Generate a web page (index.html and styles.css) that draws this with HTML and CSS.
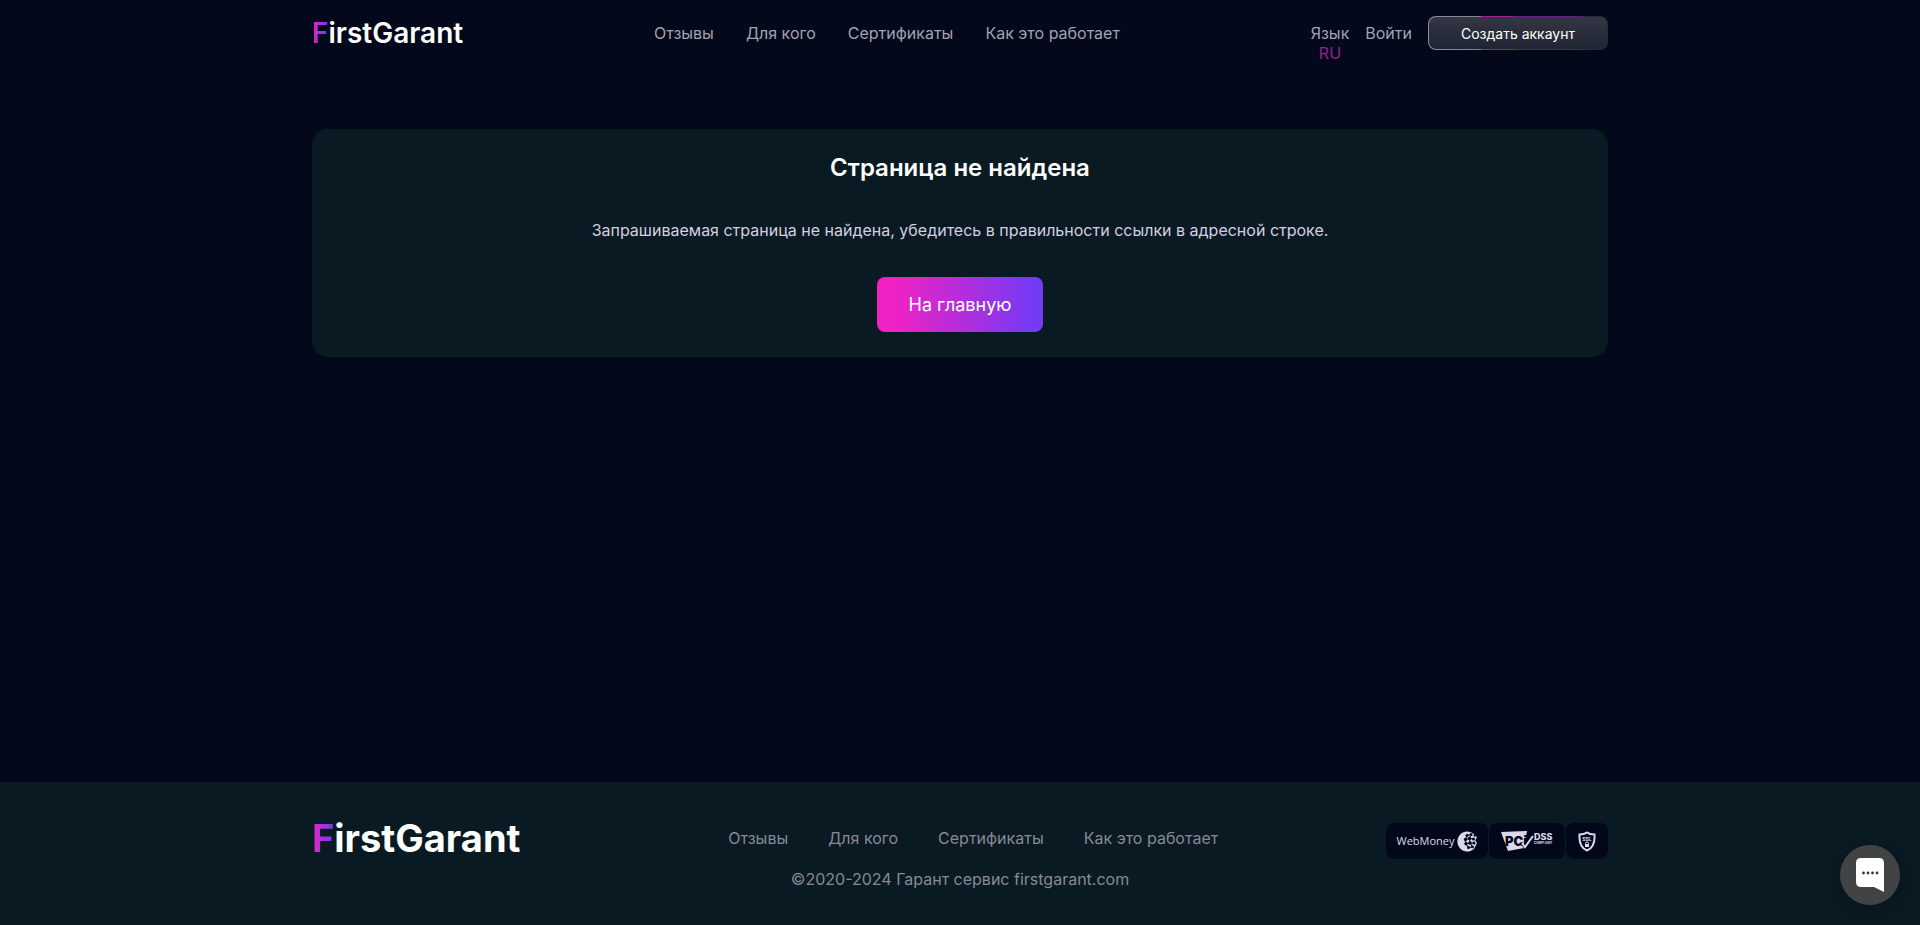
FILE: index.html
```
<!DOCTYPE html>
<html lang="ru">
<head>
    <meta charset="UTF-8">
    <meta name="viewport" content="width=device-width, initial-scale=1.0">
    <title>Страница не найдена</title>
    <link rel="stylesheet" href="styles.css">
</head>
<body>
    <header class="header">
        <div class="container header-row">
            <a href="#" class="logo"><span class="logo-accent">F</span>irstGarant</a>
            <nav class="nav">
                <a href="#">Отзывы</a>
                <a href="#">Для кого</a>
                <a href="#">Сертификаты</a>
                <a href="#">Как это работает</a>
            </nav>
            <div class="account">
                <div class="lang">
                    <span>Язык</span>
                    <a href="#" class="lang-current">RU</a>
                </div>
                <a href="#" class="login">Войти</a>
                <button type="button" class="btn-create">Создать аккаунт</button>
            </div>
        </div>
    </header>

    <main class="container main">
        <section class="card">
            <h1>Страница не найдена</h1>
            <p>Запрашиваемая страница не найдена, убедитесь в правильности ссылки в адресной строке.</p>
            <a href="#" class="btn-home">На главную</a>
        </section>
    </main>

    <footer class="footer">
        <div class="container footer-row">
            <a href="#" class="logo logo-big"><span class="logo-accent">F</span>irstGarant</a>
            <nav class="footer-nav">
                <a href="#">Отзывы</a>
                <a href="#">Для кого</a>
                <a href="#">Сертификаты</a>
                <a href="#">Как это работает</a>
            </nav>
            <div class="badges">
                <div class="badge badge-wm">
                    <span>WebMoney</span>
                    <svg width="21" height="21" viewBox="0 0 21 21">
                        <path fill="#dcd8ec" d="M10.500 0.500A10 10 0 1 0 17 18L19 14L20 12L18.500 9L20 6L17 3Q14 0.500 10.500 0.500Z"/>
                        <g fill="#03071a">
                            <circle cx="10" cy="4.500" r="1.500"/><circle cx="14" cy="3.500" r="1.500"/><circle cx="17.800" cy="4.500" r="1.200"/>
                            <circle cx="8.500" cy="8.500" r="1.700"/><circle cx="12.500" cy="7.500" r="1.700"/><circle cx="16.500" cy="8" r="1.500"/>
                            <circle cx="9" cy="12.700" r="1.700"/><circle cx="13" cy="12" r="1.700"/><circle cx="17" cy="12" r="1.500"/>
                            <circle cx="11.500" cy="16.500" r="1.500"/><circle cx="15.500" cy="16" r="1.400"/><circle cx="19.500" cy="9.500" r="1"/>
                        </g>
                        <path fill="none" stroke="#03071a" d="M14 3.500L10 4.500L8.500 8.500L9 12.700L11.500 16.500L15.500 16M14 3.500L12.500 7.500L13 12L15.500 16M8.500 8.500L12.500 7.500L16.500 8M9 12.700L13 12L17 12"/>
                    </svg>
                </div>
                <div class="badge badge-pci">
                    <svg width="53" height="21" viewBox="0 0 53 21">
                        <path fill="#dcd8ec" d="M0 1L26 0L23 17L7 20Z"/>
                        <text x="4" y="15" class="pci-text">PCi</text>
                        <path fill="none" stroke="#03071a" stroke-width="3" d="M21 13L24 16L31 6"/>
                        <path fill="none" stroke="#dcd8ec" stroke-width="2" d="M21 12L24 16L32 5"/>
                        <text x="33" y="9" class="dss-text">DSS</text>
                        <text x="33" y="13" class="dss-small">COMPLIANT</text>
                    </svg>
                </div>
                <div class="badge badge-ssl">
                    <svg width="18" height="21" viewBox="0 0 18 21">
                        <path fill="none" stroke="#dcd8ec" stroke-width="2" d="M9 1.500C7 3 4 3.500 1.500 3.500C1 11 3 17 9 19.500C15 17 17 11 16.500 3.500C14 3.500 11 3 9 1.500Z"/>
                        <text x="9" y="10" class="ssl-text">SSL</text>
                        <path fill="none" stroke="#dcd8ec" d="M7.500 13V12.500a1.500 1.500 0 0 1 3 0V13"/>
                        <rect x="7" y="13" width="4" height="3" fill="#dcd8ec"/>
                    </svg>
                </div>
            </div>
        </div>
        <p class="copyright">©2020-2024 Гарант сервис firstgarant.com</p>
    </footer>

    <button type="button" class="chat" aria-label="Чат">
        <svg width="28" height="35" viewBox="0 0 28 35">
            <path fill="#fff" d="M5 0H23Q28 0 28 5V34L18 29H5Q0 29 0 24V5Q0 0 5 0Z"/>
            <g fill="#33353f">
                <circle cx="7.500" cy="15" r="1.400"/><circle cx="12" cy="15" r="1.400"/>
                <circle cx="16.500" cy="15" r="1.400"/><circle cx="21" cy="15" r="1.400"/>
            </g>
        </svg>
    </button>
</body>
</html>
```
FILE: styles.css
```
* {
    box-sizing: border-box;
}
body {
    margin: 0;
    min-height: 100vh;
    display: flex;
    flex-direction: column;
    background-color: #03081a;
    color: #fff;
    font-family: Inter, sans-serif;
    font-size: 16px;
    line-height: 20px;
}
a {
    color: inherit;
    text-decoration: none;
}
button {
    font-family: inherit;
    cursor: pointer;
}
.container {
    width: 100%;
    max-width: 1320px;
    margin: 0 auto;
    padding: 0 12px;
}

/* header */
.header {
    padding-top: 16px;
}
.header-row {
    display: flex;
    justify-content: space-between;
    align-items: flex-start;
}
.logo {
    font-size: 28px;
    line-height: 34px;
    font-weight: 600;
}
.logo-accent {
    background: linear-gradient(90deg, #e724c4, #743af5);
    -webkit-background-clip: text;
    background-clip: text;
    color: transparent;
}
.nav {
    display: flex;
    gap: 32px;
    padding-top: 7px;
    color: #a1a3af;
}
.account {
    display: flex;
    gap: 16px;
    color: #a1a3af;
}
.lang {
    display: flex;
    flex-direction: column;
    align-items: center;
    padding-top: 7px;
}
.lang-current {
    color: #97218f;
}
.login {
    padding-top: 7px;
}
.btn-create {
    width: 180px;
    height: 34px;
    border: 1px solid transparent;
    border-radius: 8px;
    background:
        linear-gradient(180deg, #343743, #1f2433) padding-box,
        linear-gradient(90deg, #8b8d98 0%, #85838f 29%, #a01c93 30%, #a01c93 47%, #651a85 48%, #651a85 84%, #262b38 88%) border-box;
    color: #fff;
    font-size: 14px;
}

/* 404 */
.main {
    flex: 1;
    padding-top: 66px;
}
.card {
    display: flex;
    flex-direction: column;
    align-items: center;
    padding: 24px 24px 25px;
    border-radius: 16px;
    background-color: #091a23;
    text-align: center;
}
.card h1 {
    margin: 0;
    font-size: 24px;
    line-height: 30px;
    font-weight: 600;
}
.card p {
    margin: 36px 0;
    line-height: 22px;
    color: #d3cfe0;
}
.btn-home {
    padding: 17px 32px;
    border-radius: 8px;
    background: linear-gradient(90deg, #f022c4 10%, #743af5 95%);
    font-size: 18px;
    line-height: 21px;
}

/* footer */
.footer {
    padding: 35px 0 36px;
    background-color: #091a23;
    color: #878995;
}
.footer-row {
    display: flex;
    justify-content: space-between;
    align-items: center;
}
.logo-big {
    color: #fff;
    font-size: 38px;
    line-height: 40px;
    font-weight: 700;
}
.footer-nav {
    display: flex;
}
.footer-nav a {
    margin-left: 40px;
}
.badges {
    display: flex;
    gap: 1px;
    padding-top: 6px;
}
.badge {
    display: flex;
    align-items: center;
    justify-content: center;
    height: 36px;
    border-radius: 8px;
    background-color: #03071a;
    color: #dcd8ec;
}
.badge-wm {
    gap: 2px;
    width: 102px;
    font-family: "Open Sans", sans-serif;
    font-size: 11px;
}
.badge-pci {
    width: 76px;
}
.badge-ssl {
    width: 42px;
}
.pci-text {
    fill: #03071a;
    font: 900 13px Inter, sans-serif;
}
.dss-text {
    fill: #dcd8ec;
    font: 800 9px Inter, sans-serif;
}
.dss-small {
    fill: #dcd8ec;
    font: 700 3px Inter, sans-serif;
}
.ssl-text {
    fill: #dcd8ec;
    font: 700 5px Inter, sans-serif;
    text-anchor: middle;
}
.copyright {
    margin: 10px 0 0;
    text-align: center;
}

/* chat button stays over the page */
.chat {
    position: fixed;
    right: 20px;
    bottom: 20px;
    display: flex;
    align-items: center;
    justify-content: center;
    width: 60px;
    height: 60px;
    padding: 0;
    border: 0;
    border-radius: 50%;
    background-color: #424345;
    box-shadow: 0 4px 16px rgba(0, 0, 0, 0.2);
}
```
